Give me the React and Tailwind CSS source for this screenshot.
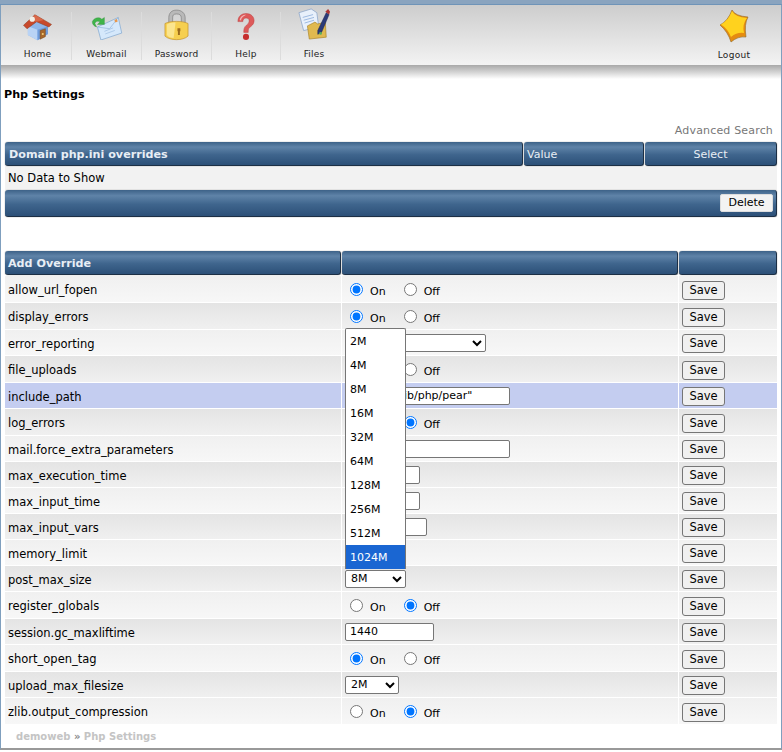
const font = "font-['DejaVu_Sans','Verdana',sans-serif]"

function HomeIcon() {
  return (
    <svg width="31" height="28" viewBox="0 0 34 32">
      <path d="M6 15 L17 7 L29 15 L29 24 L17 31 L6 25 Z" fill="#8fb6ea" />
      <path d="M6 15 L17 19 L17 31 L6 25 Z" fill="#b9d3f5" />
      <path d="M17 19 L29 15 L29 24 L17 31 Z" fill="#6f9cdc" />
      <path d="M1 14 L14 2 L33 13 L30 16 L16 10 L5 18 Z" fill="#c8492c" stroke="#8a3a1e" strokeWidth="0.6" />
      <path d="M14 2 L24 8 L16 10 L10 8 Z" fill="#d9694a" />
      <circle cx="11" cy="7" r="3" fill="#f3efe6" />
      <path d="M20 20 L26 18 L26 27 L20 30 Z" fill="#a8672a" stroke="#6f4316" strokeWidth="0.5" />
      <rect x="22" y="23" width="2" height="2" fill="#f2d27a" />
    </svg>
  )
}

function MailIcon() {
  return (
    <svg width="32" height="26" viewBox="0 0 34 30">
      <path d="M6 15 L30 4 L34 22 L10 30 Z" fill="#d5e8fb" stroke="#7fa6cf" strokeWidth="0.8" />
      <path d="M6 15 L20 17 L30 4" fill="none" stroke="#93b5d9" strokeWidth="0.8" />
      <rect x="26" y="6.5" width="3" height="3" fill="#e8964a" transform="rotate(-22 27 8)" />
      <path d="M14 20 L24 16 M15 23 L26 19" stroke="#9dbde0" strokeWidth="0.8" />
      <path d="M0 9 C2 4 8 3 11 6 L14 4 L14 12 L6 12 L9 9 C7 8 4 8 3 11 L5 15 C2 14 0 12 0 9 Z" fill="#3fb54a" stroke="#2c8a36" strokeWidth="0.4" />
    </svg>
  )
}

function LockIcon() {
  return (
    <svg width="25" height="32" viewBox="0 0 26 33" className="-mt-[4px]">
      <path d="M5 15 L5 9 C5 4 8 1 13 1 C18 1 22 4 22 9 L22 15 L18 15 L18 9 C18 6 16 5 13 5 C10 5 9 6 9 9 L9 15 Z" fill="#b9b9b9" stroke="#7d7d7d" strokeWidth="0.7" />
      <path d="M1 15 C6 12 20 12 25 15 L25 28 C20 33 6 33 1 28 Z" fill="#f6cf4f" stroke="#c2902a" strokeWidth="0.7" />
      <path d="M3 16 C6 14 10 14 12 14 L10 30 C7 30 4 29 3 27 Z" fill="#fbe58f" />
      <path d="M14 20 L17 20 L17 23 L16.5 23 L16.5 27 L14.5 27 L14.5 23 L14 23 Z" fill="#9a6a1c" />
    </svg>
  )
}

function HelpIcon() {
  return (
    <svg width="18" height="28" viewBox="0 0 20 30">
      <path d="M1 9 C1 3 5 0 10 0 C16 0 19 4 19 8 C19 12 16 14 13.5 16 C12.5 17 12.5 19 12.5 21 L7.5 21 C7.5 17 8 15 10.5 13 C12.5 11.5 13.5 10 13.5 8 C13.5 6 12 5 10 5 C8 5 6.5 6.5 6.5 9 Z" fill="#dd5a5a" stroke="#b93c3c" strokeWidth="0.5" />
      <path d="M3 7 C4 3 7 1.5 10 1.5 C8 3 5 4 4.5 8 Z" fill="#f3b4b4" />
      <circle cx="10" cy="26" r="3.4" fill="#c62f2f" />
    </svg>
  )
}

function FilesIcon() {
  return (
    <svg width="32" height="32" viewBox="0 0 34 34" className="-mt-[6px]">
      <path d="M1 5 L14 1 L20 5 L22 20 L6 24 Z" fill="#e8f0fb" stroke="#7f9cc4" strokeWidth="0.7" />
      <path d="M5 10 L16 7 M6 13 L17 10 M7 16 L17 13" stroke="#8fb0dc" strokeWidth="0.9" />
      <path d="M10 19 L18 15 L21 17 L29 15 L30 31 L12 33 Z" fill="#e0b94f" stroke="#a98428" strokeWidth="0.7" />
      <path d="M21 24 L30 5 L33 7 L25 26 L21 28 Z" fill="#2b3a78" stroke="#182252" strokeWidth="0.5" />
      <path d="M29 4 L32 1 L34 4 L33 7 Z" fill="#a83434" />
      <circle cx="24" cy="27" r="1.5" fill="#5bae5b" />
    </svg>
  )
}

function StarIcon() {
  return (
    <svg width="30" height="34" viewBox="0 0 30 34">
      <path d="M13 1 Q16 7 29 8 Q25 15 27 28 Q19 27 12 33 Q9 23 1 16 Q9 12 13 1 Z" fill="#e58c10" stroke="#8f6a2a" strokeWidth="0.6" />
      <path d="M13 2 Q16 8 28 9 Q23 15 25 24 Q18 23 12 28 Q9 20 2 15.5 Q9 12 13 2 Z" fill="#ffd21e" />
    </svg>
  )
}

const nav = [
  { label: "Home", icon: <HomeIcon />, w: "w-[71px] pl-[3px]" },
  { label: "Webmail", icon: <MailIcon />, w: "w-[70px]" },
  { label: "Password", icon: <LockIcon />, w: "w-[70px]" },
  { label: "Help", icon: <HelpIcon />, w: "w-[69px]" },
  { label: "Files", icon: <FilesIcon />, w: "w-[66px]" },
]

function Navbar() {
  return (
    <div className="flex justify-between h-[60px] bg-gradient-to-b from-[#cdcdcd] to-[#f3f3f3]">
      <ul className="flex pt-[5px]">
        {nav.map((item, i) => (
          <li key={item.label} className={`${item.w} h-[48px] mt-[2px] flex flex-col items-center justify-between ${i < 4 ? "border-r border-[#dcdcdc]" : ""}`}>
            <span className="h-[34px] -mt-[2px] flex items-center">{item.icon}</span>
            <span className="text-[9px] leading-[11px] tracking-[0.2px] text-[#222]">{item.label}</span>
          </li>
        ))}
      </ul>
      <div className="w-[60px] mr-[17px] pt-[4px] flex flex-col items-center">
        <StarIcon />
        <span className="mt-[7px] text-[9px] leading-[11px] tracking-[0.3px] text-[#222]">Logout</span>
      </div>
    </div>
  )
}

function Bar({ children, className = "" }) {
  return (
    <div className={`flex items-center rounded-[3px] border-b border-r border-[#1c2f45] bg-[linear-gradient(#3d6288,#5f83a8_22%,#3f658d_55%,#2c5078)] shadow-[0_0_1px_#555] ${className}`}>
      {children}
    </div>
  )
}

function Radio({ on }) {
  return (
    <div className="flex items-center gap-[18px] pl-[8px]">
      <label className="flex items-center gap-[7px] text-[11px] text-black">
        <input type="radio" className="m-0 w-[13px] h-[13px]" checked={!!on} readOnly />
        <span className="mt-[6px]">On</span>
      </label>
      <label className="flex items-center gap-[7px] text-[11px] text-black">
        <input type="radio" className="m-0 w-[13px] h-[13px]" checked={!on} readOnly />
        <span className="mt-[6px]">Off</span>
      </label>
    </div>
  )
}

function Field({ value, w }) {
  return (
    <input className={`${w} h-[18px] ml-[3px] px-[4px] bg-white border border-[#767676] rounded-[2px] text-[11px] text-black outline-none`} value={value} readOnly />
  )
}

function Picker({ value, w }) {
  return (
    <select className={`${w} h-[18px] ml-[3px] pl-[1px] bg-white border border-[#767676] rounded-[2px] text-[11px] text-black`} value={value} onChange={() => {}}>
      <option value={value}>{value}</option>
    </select>
  )
}

const sizes = ["2M", "4M", "8M", "16M", "32M", "64M", "128M", "256M", "512M", "1024M"]

function OpenMenu() {
  return (
    <div className="relative flex">
      <Picker value="8M" w="w-[61px]" />
      <ul className="absolute left-[3px] bottom-[19px] w-[61px] bg-white border border-[#767676] border-b-0 rounded-t-[2px]">
        {sizes.map(s => (
          <li key={s} className={`h-[24px] pl-[4px] pt-[4px] flex items-center text-[11px] ${s === "1024M" ? "bg-[#1a66d2] text-white" : "text-black"}`}>{s}</li>
        ))}
      </ul>
    </div>
  )
}

const rows = [
  { name: "allow_url_fopen", value: <Radio on />, tall: true },
  { name: "display_errors", value: <Radio on />, tall: true },
  { name: "error_reporting", value: <Picker value="E_ALL" w="w-[141px]" /> },
  { name: "file_uploads", value: <Radio on />, tall: true },
  { name: "include_path", value: <Field value={'".:/home/lib/php/pear"'} w="w-[165px]" />, active: true },
  { name: "log_errors", value: <Radio />, tall: true },
  { name: "mail.force_extra_parameters", value: <Field value="" w="w-[165px]" /> },
  { name: "max_execution_time", value: <Field value="30" w="w-[75px]" /> },
  { name: "max_input_time", value: <Field value="60" w="w-[75px]" /> },
  { name: "max_input_vars", value: <Field value="1000" w="w-[82px]" /> },
  { name: "memory_limit", value: <Picker value="256M" w="w-[61px]" /> },
  { name: "post_max_size", value: <OpenMenu /> },
  { name: "register_globals", value: <Radio />, tall: true },
  { name: "session.gc_maxliftime", value: <Field value="1440" w="w-[89px]" /> },
  { name: "short_open_tag", value: <Radio on />, tall: true },
  { name: "upload_max_filesize", value: <Picker value="2M" w="w-[54px]" /> },
  { name: "zlib.output_compression", value: <Radio />, tall: true },
]

function Row({ row, odd }) {
  const bg = row.active
    ? "bg-[#c4cdf0]"
    : odd
      ? "bg-gradient-to-b from-[#e4e4e4] to-[#f0f0f0]"
      : "bg-gradient-to-b from-[#f0f0f0] to-[#f7f7f7]"
  return (
    <div className={`flex gap-px pb-px ${row.tall ? "h-[27px]" : "h-[26px]"}`}>
      <div className={`w-[336px] pl-[3px] pt-[4px] flex items-center text-[11.5px] text-black ${bg}`}>{row.name}</div>
      <div className={`w-[336px] flex items-center ${bg}`}>{row.value}</div>
      <div className={`flex-1 pl-[3px] pt-[2px] flex items-center ${bg}`}>
        <button className="w-[43px] h-[19px] bg-[#f0f0f0] border border-[#767676] rounded-[3px] text-[11.5px] text-black">Save</button>
      </div>
    </div>
  )
}

export default function App() {
  return (
    <div className={`${font} w-[782px] h-[752px] overflow-hidden bg-white`}>
      <div className="h-[5px] bg-[#8aa4bf] border-b border-[#6f94b8]" />
      <div className="h-[745px] border-l border-r border-[#7f9fbe] border-b-2 border-b-[#999]">
        <Navbar />
        <div className="h-[14px] bg-gradient-to-b from-[#a8a8a8] to-white" />
        <h1 className="mt-[9px] pl-[3px] text-[11.15px] leading-[14px] font-bold text-[#000]">Php Settings</h1>
        <div className="pt-[22px] pr-[8px] text-right text-[11px] leading-[14px] tracking-[0.17px] text-[#777]">Advanced Search</div>
        <div className="mx-[4px] mt-[4px]">
          <div className="flex gap-px h-[24px]">
            <Bar className="w-[518px] pl-[4px] pt-[3px] text-[11.15px] font-bold text-[#e8eef5]">Domain php.ini overrides</Bar>
            <Bar className="w-[120px] pl-[3px] pt-[3px] text-[11px] text-[#e8eef5]">Value</Bar>
            <Bar className="flex-1 justify-center pt-[3px] text-[11px] text-[#e8eef5]">Select</Bar>
          </div>
          <div className="h-[24px] pl-[3px] pt-[2px] flex items-center text-[11.5px] bg-[#f2f2f2] text-black">No Data to Show</div>
          <Bar className="h-[27px] justify-end pr-[3px]">
            <button className="w-[53px] h-[18px] bg-[#f3f3f3] border border-[#ddd] rounded-[2px] text-[11px] text-black">Delete</button>
          </Bar>
          <div className="flex gap-px h-[24px] mt-[34px] mb-[1px]">
            <Bar className="w-[336px] pl-[3px] pt-[3px] text-[11.15px] font-bold text-[#e8eef5]">Add Override</Bar>
            <Bar className="w-[336px]" />
            <Bar className="flex-1" />
          </div>
          <div className="flex flex-col">
            {rows.map((row, i) => <Row key={row.name} row={row} odd={i % 2 === 1} />)}
          </div>
          <div className="pl-[11px] pt-[5px] text-[10px] leading-[14px] font-bold text-[#c4c4c4]">
            demoweb <span className="text-[#8a8a8a]">»</span> Php Settings
          </div>
        </div>
      </div>
    </div>
  )
}
